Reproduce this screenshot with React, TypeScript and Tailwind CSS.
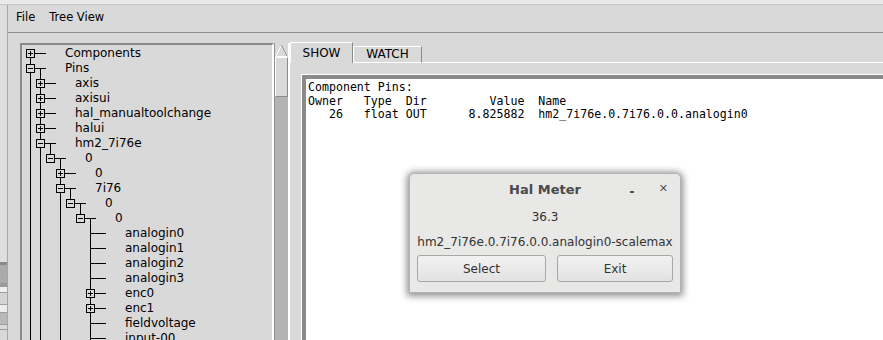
import React from 'react';

type Row = { l: number; t: string; b: '+' | '-' | null; n: boolean; a: number[] };

const A3 = [0, 1, 3];
const rows: Row[] = [
  { l: 0, t: 'Components', b: '+', n: true, a: [] },
  { l: 0, t: 'Pins', b: '-', n: true, a: [] },
  { l: 1, t: 'axis', b: '+', n: true, a: [0] },
  { l: 1, t: 'axisui', b: '+', n: true, a: [0] },
  { l: 1, t: 'hal_manualtoolchange', b: '+', n: true, a: [0] },
  { l: 1, t: 'halui', b: '+', n: true, a: [0] },
  { l: 1, t: 'hm2_7i76e', b: '-', n: true, a: [0] },
  { l: 2, t: '0', b: '-', n: false, a: [0, 1] },
  { l: 3, t: '0', b: '+', n: true, a: [0, 1] },
  { l: 3, t: '7i76', b: '-', n: true, a: [0, 1] },
  { l: 4, t: '0', b: '-', n: false, a: A3 },
  { l: 5, t: '0', b: '-', n: false, a: A3 },
  { l: 6, t: 'analogin0', b: null, n: true, a: A3 },
  { l: 6, t: 'analogin1', b: null, n: true, a: A3 },
  { l: 6, t: 'analogin2', b: null, n: true, a: A3 },
  { l: 6, t: 'analogin3', b: null, n: true, a: A3 },
  { l: 6, t: 'enc0', b: '+', n: true, a: A3 },
  { l: 6, t: 'enc1', b: '+', n: true, a: A3 },
  { l: 6, t: 'fieldvoltage', b: null, n: true, a: A3 },
  { l: 6, t: 'input-00', b: null, n: true, a: A3 },
];

function Connector({ row, first }: { row: Row; first: boolean }) {
  const w = 43 + 10 * row.l;
  const x = (lv: number) => 8.5 + 10 * lv;
  const xl = x(row.l);
  return (
    <svg width={w} height={15} className="shrink-0" shapeRendering="crispEdges">
      {row.a.map((lv) => (
        <line key={lv} x1={x(lv)} y1={0} x2={x(lv)} y2={15} stroke="#000" />
      ))}
      {!first && <line x1={xl} y1={0} x2={xl} y2={7.5} stroke="#000" />}
      {row.n && <line x1={xl} y1={7.5} x2={xl} y2={15} stroke="#000" />}
      {row.b === '-' && (
        <line x1={x(row.l + 1)} y1={7.5} x2={x(row.l + 1)} y2={15} stroke="#000" />
      )}
      <line x1={xl} y1={7.5} x2={xl + 15} y2={7.5} stroke="#000" />
      {row.b && (
        <g>
          <rect x={xl - 4} y={3.5} width={8} height={8} fill="#d9d9d9" stroke="#000" />
          <line x1={xl - 2.5} y1={7.5} x2={xl + 2.5} y2={7.5} stroke="#000" />
          {row.b === '+' && <line x1={xl} y1={5} x2={xl} y2={10} stroke="#000" />}
        </g>
      )}
    </svg>
  );
}

function LeftStrip() {
  return (
    <div className="w-[8px] shrink-0 flex flex-col border-r border-[#a6a6a6] bg-[#d9d9d9]">
      <div className="h-[257px] bg-[#dedede]" />
      <div className="h-[3px] bg-[#8a8a8a]" />
      <div className="h-[18px] bg-[#ababab]" />
      <div className="h-[4px] bg-[#9a9a9a]" />
      <div className="h-[5px] bg-[#efefef]" />
      <div className="h-[13px] bg-[#d4d4d4] border-y border-[#a0a0a0]" />
      <div className="h-[7px] bg-[#ededed]" />
      <div className="h-[13px] bg-[#b8b8b8] border-y border-[#9a9a9a]" />
      <div className="h-[4px] bg-[#d9d9d9]" />
      <div className="h-[1px] bg-[#999999]" />
      <div className="flex-1 bg-[#d9d9d9]" />
    </div>
  );
}

function Tree() {
  return (
    <div className="mt-[10px] ml-[12px] w-[254px] shrink-0 border-l-2 border-t-2 border-[#8a8a8a] border-r-2 border-r-white pt-[1px] overflow-hidden">
      {rows.map((r, i) => (
        <div key={i} className="flex items-center h-[15px] text-[12px] leading-[15px] whitespace-pre">
          <Connector row={r} first={i === 0} />
          <span>{r.t}</span>
        </div>
      ))}
    </div>
  );
}

function Scrollbar() {
  return (
    <div className="mt-[10px] w-[16px] shrink-0 flex flex-col border-l border-[#8f8f8f] border-r-2 border-r-white bg-[#b3b3b3]">
      <div className="h-[14px] bg-[#d9d9d9] flex items-center justify-center">
        <svg width="13" height="13" viewBox="0 0 13 13" shapeRendering="crispEdges">
          <polygon points="6.5,1 1,12 12,12" fill="#d9d9d9" />
          <line x1="6.5" y1="1" x2="1" y2="12" stroke="#ffffff" />
          <line x1="6.5" y1="1" x2="12" y2="12" stroke="#9a9a9a" />
          <line x1="1" y1="12.5" x2="12" y2="12.5" stroke="#ffffff" />
        </svg>
      </div>
      <div className="h-[40px] bg-[#d9d9d9] border-l border-t border-white border-r border-b border-r-[#8a8a8a] border-b-[#8a8a8a]" />
      <div className="flex-1" />
    </div>
  );
}

function Notebook() {
  return (
    <div className="flex-1 min-w-0 flex flex-col">
      <div className="h-[30px] flex items-end text-[12px]">
        <div className="w-[63px] h-[21px] border-t border-l border-white border-r border-r-[#8a8a8a] bg-[#d9d9d9] flex items-center justify-center">
          SHOW
        </div>
        <div className="w-[69px] h-[17px] border-t border-l border-b border-white border-r border-r-[#8a8a8a] flex items-center justify-center pb-[1px]">
          WATCH
        </div>
        <div className="flex-1 h-[1px] bg-white" />
      </div>
      <div className="flex-1 min-h-0 flex pl-[11px] pt-[11px]">
        <div className="flex-1 flex border-l border-t border-white">
          <div className="flex-1 flex border-l-[4px] border-t-[4px] border-[#8a8a8a] bg-white">
            <div className="pl-[2px] pt-[2px] font-['DejaVu_Sans_Mono',monospace] text-[11.6px] leading-[13.5px] whitespace-pre text-black">
              {'Component Pins:\nOwner   Type  Dir         Value  Name\n   26   float OUT      8.825882  hm2_7i76e.0.7i76.0.0.analogin0'}
            </div>
          </div>
        </div>
      </div>
    </div>
  );
}

function HalMeter() {
  return (
    <div className="absolute left-[409px] top-[173px] w-[272px] h-[120px] flex flex-col bg-[#e8e8e7] rounded-t-[5px] border border-[#b4b4b4] shadow-[0_1px_7px_2px_rgba(0,0,0,0.45)] text-[#333333] text-[12px]">
      <div className="h-[31px] relative flex items-center justify-center">
        <span className="font-bold text-[13px] text-[#4a4a4a]">Hal Meter</span>
        <div className="absolute right-[46px] top-[17px] w-[4px] h-[2px] bg-[#555555]" />
        <span className="absolute right-[12px] top-[7px] text-[11px] font-bold text-[#555555]">✕</span>
      </div>
      <div className="h-[24px] flex items-center justify-center">36.3</div>
      <div className="h-[25px] flex items-center justify-center">hm2_7i76e.0.7i76.0.0.analogin0-scalemax</div>
      <div className="mt-[1px] flex px-[7px] gap-[11px]">
        <div className="w-[129px] h-[27px] rounded-[3px] border border-[#a8a8a8] bg-gradient-to-b from-[#f2f2f2] to-[#e2e2e2] flex items-center justify-center">
          Select
        </div>
        <div className="w-[116px] h-[27px] rounded-[3px] border border-[#a8a8a8] bg-gradient-to-b from-[#f2f2f2] to-[#e2e2e2] flex items-center justify-center">
          Exit
        </div>
      </div>
    </div>
  );
}

export default function App() {
  return (
    <div className="relative w-[883px] h-[340px] overflow-hidden bg-[#d9d9d9] font-['DejaVu_Sans',sans-serif] text-black">
      <div className="h-[5px] bg-[#e9e9e9] border-b border-[#c6c6c6]" />
      <div className="flex h-[335px]">
        <LeftStrip />
        <div className="flex-1 min-w-0 flex flex-col">
          <div className="h-[28px] shrink-0 flex items-center border-b border-[#8f8f8f] text-[11.5px] pb-[1px]">
            <span className="ml-[8px]">File</span>
            <span className="ml-[14px]">Tree View</span>
          </div>
          <div className="flex-1 min-h-0 flex">
            <Tree />
            <Scrollbar />
            <Notebook />
          </div>
        </div>
      </div>
      <HalMeter />
    </div>
  );
}
